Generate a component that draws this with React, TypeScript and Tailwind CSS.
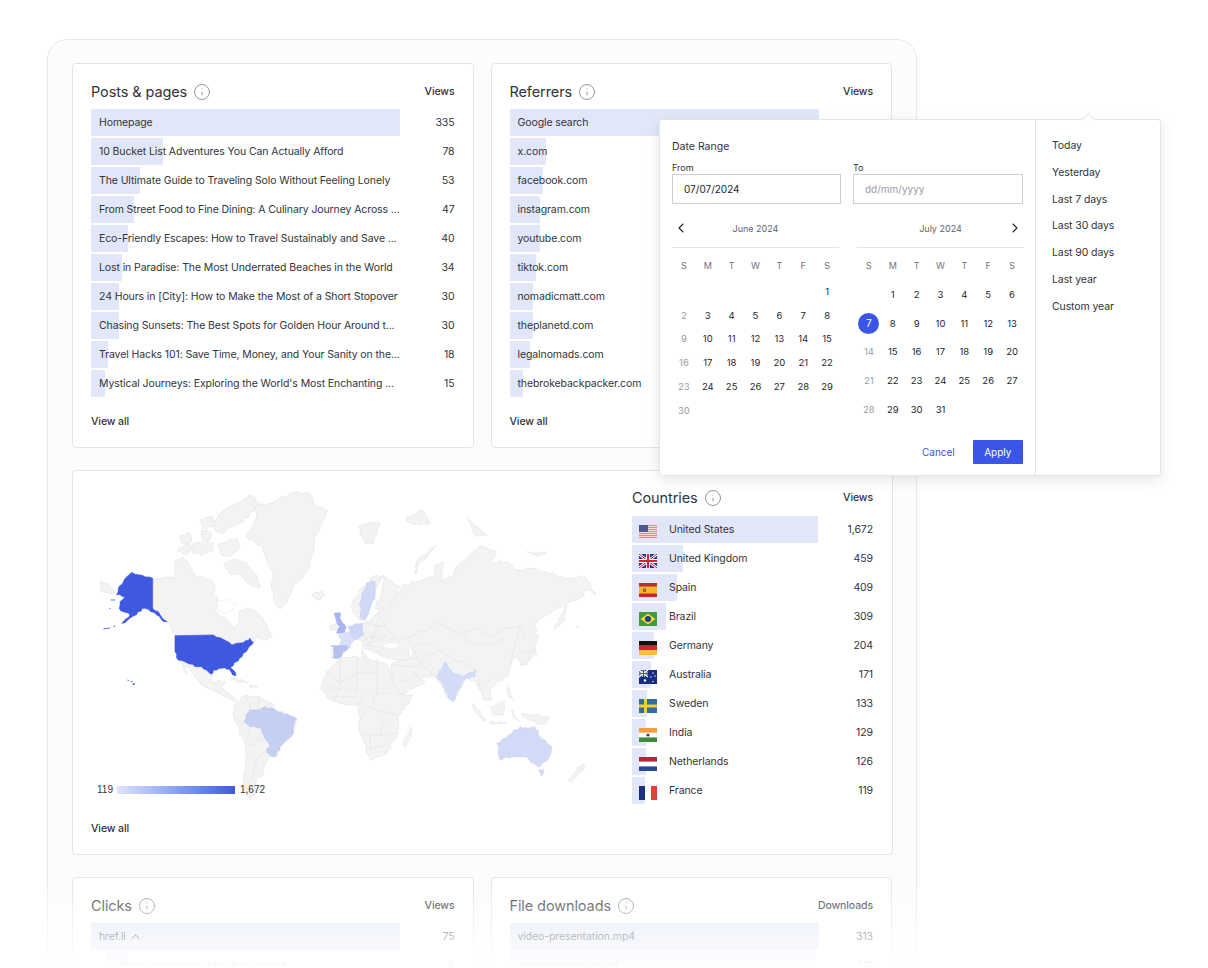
import React from "react";
import { ChevronLeft, ChevronRight, ChevronUp, Info } from "lucide-react";

type Row = { label: React.ReactNode; value: string; bar: number };

const posts: Row[] = [
  { label: "Homepage", value: "335", bar: 309 },
  { label: "10 Bucket List Adventures You Can Actually Afford", value: "78", bar: 72 },
  { label: "The Ultimate Guide to Traveling Solo Without Feeling Lonely", value: "53", bar: 49 },
  { label: "From Street Food to Fine Dining: A Culinary Journey Across ...", value: "47", bar: 43 },
  { label: "Eco-Friendly Escapes: How to Travel Sustainably and Save ...", value: "40", bar: 37 },
  { label: "Lost in Paradise: The Most Underrated Beaches in the World", value: "34", bar: 31 },
  { label: "24 Hours in [City]: How to Make the Most of a Short Stopover", value: "30", bar: 28 },
  { label: "Chasing Sunsets: The Best Spots for Golden Hour Around t...", value: "30", bar: 28 },
  { label: "Travel Hacks 101: Save Time, Money, and Your Sanity on the...", value: "18", bar: 17 },
  { label: "Mystical Journeys: Exploring the World's Most Enchanting ...", value: "15", bar: 14 },
];

const referrers: Row[] = [
  { label: "Google search", value: "", bar: 309 },
  { label: "x.com", value: "", bar: 36 },
  { label: "facebook.com", value: "", bar: 33 },
  { label: "instagram.com", value: "", bar: 30 },
  { label: "youtube.com", value: "", bar: 30 },
  { label: "tiktok.com", value: "", bar: 26 },
  { label: "nomadicmatt.com", value: "", bar: 23 },
  { label: "theplanetd.com", value: "", bar: 23 },
  { label: "legalnomads.com", value: "", bar: 20 },
  { label: "thebrokebackpacker.com", value: "", bar: 13 },
];

const countries: { name: string; value: string; bar: number; flag: React.ReactNode }[] = [
  { name: "United States", value: "1,672", bar: 186, flag: <FlagUS /> },
  { name: "United Kingdom", value: "459", bar: 51, flag: <FlagUK /> },
  { name: "Spain", value: "409", bar: 45, flag: <FlagES /> },
  { name: "Brazil", value: "309", bar: 34, flag: <FlagBR /> },
  { name: "Germany", value: "204", bar: 22, flag: <FlagDE /> },
  { name: "Australia", value: "171", bar: 19, flag: <FlagAU /> },
  { name: "Sweden", value: "133", bar: 15, flag: <FlagSE /> },
  { name: "India", value: "129", bar: 14, flag: <FlagIN /> },
  { name: "Netherlands", value: "126", bar: 14, flag: <FlagNL /> },
  { name: "France", value: "119", bar: 13, flag: <FlagFR /> },
];

function FlagBox({ children }: { children: React.ReactNode }) {
  return (
    <svg width="18" height="14" viewBox="0 0 18 14" className="mt-[4px] shrink-0">
      {children}
    </svg>
  );
}

function FlagUS() {
  return (
    <FlagBox>
      <rect width="18" height="14" fill="#f7dcdc" />
      {[0, 2, 4, 6, 8, 10, 12].map((y) => (
        <rect key={y} y={y} width="18" height="1" fill="#d98a8c" />
      ))}
      <rect width="9" height="7" fill="#4a5a8c" />
    </FlagBox>
  );
}

function FlagUK() {
  return (
    <FlagBox>
      <rect width="18" height="14" fill="#1f3a8a" />
      <path d="M0 0L18 14M18 0L0 14" stroke="#fff" strokeWidth="2.6" />
      <path d="M0 0L18 14M18 0L0 14" stroke="#d0213a" strokeWidth="1" />
      <path d="M9 0V14M0 7H18" stroke="#fff" strokeWidth="4" />
      <path d="M9 0V14M0 7H18" stroke="#d0213a" strokeWidth="2.2" />
    </FlagBox>
  );
}

function FlagES() {
  return (
    <FlagBox>
      <rect width="18" height="14" fill="#b5302c" />
      <rect y="3.5" width="18" height="7" fill="#f2b632" />
      <rect x="4" y="5.5" width="3" height="3.5" fill="#b5552c" />
    </FlagBox>
  );
}

function FlagBR() {
  return (
    <FlagBox>
      <rect width="18" height="14" fill="#3f9b3c" />
      <path d="M9 1.5L16.5 7L9 12.5L1.5 7Z" fill="#f5d33a" />
      <circle cx="9" cy="7" r="3" fill="#1e3f8a" />
    </FlagBox>
  );
}

function FlagDE() {
  return (
    <FlagBox>
      <rect width="18" height="4.7" fill="#111" />
      <rect y="4.7" width="18" height="4.7" fill="#d8232a" />
      <rect y="9.4" width="18" height="4.6" fill="#f4c430" />
    </FlagBox>
  );
}

function FlagAU() {
  return (
    <FlagBox>
      <rect width="18" height="14" fill="#1a2a80" />
      <path d="M0 0L9 7M9 0L0 7" stroke="#fff" strokeWidth="1.4" />
      <path d="M4.5 0V7M0 3.5H9" stroke="#fff" strokeWidth="2" />
      <path d="M4.5 0V7M0 3.5H9" stroke="#d0213a" strokeWidth="1" />
      <circle cx="6" cy="10.5" r="1.2" fill="#fff" />
      <circle cx="14" cy="3" r="0.7" fill="#fff" />
      <circle cx="16" cy="6" r="0.7" fill="#fff" />
      <circle cx="12" cy="7" r="0.7" fill="#fff" />
      <circle cx="14" cy="11.5" r="0.7" fill="#fff" />
    </FlagBox>
  );
}

function FlagSE() {
  return (
    <FlagBox>
      <rect width="18" height="14" fill="#2f6ca8" />
      <rect x="5" width="3" height="14" fill="#f4cb3a" />
      <rect y="5.5" width="18" height="3" fill="#f4cb3a" />
    </FlagBox>
  );
}

function FlagIN() {
  return (
    <FlagBox>
      <rect width="18" height="14" fill="#fff" />
      <rect width="18" height="4.6" fill="#f59c3a" />
      <rect y="9.4" width="18" height="4.6" fill="#3c8c3c" />
      <circle cx="9" cy="7" r="1.6" fill="#2b3a8c" />
    </FlagBox>
  );
}

function FlagNL() {
  return (
    <FlagBox>
      <rect width="18" height="14" fill="#fff" />
      <rect width="18" height="4.6" fill="#a92b3a" />
      <rect y="9.4" width="18" height="4.6" fill="#2c4a94" />
    </FlagBox>
  );
}

function FlagFR() {
  return (
    <FlagBox>
      <rect width="18" height="14" fill="#fff" />
      <rect width="6" height="14" fill="#1c2f80" />
      <rect x="12" width="6" height="14" fill="#e53c3c" />
    </FlagBox>
  );
}

function Heading({ title, column }: { title: string; column: string }) {
  return (
    <div className="flex h-[20px] items-center justify-between">
      <div className="flex items-center gap-[6px]">
        <h3 className="text-[14.5px] leading-5 font-normal tracking-[-0.1px] text-[#30343c]">{title}</h3>
        <Info size={18} strokeWidth={1.2} className="text-[#8a8a8a]" />
      </div>
      <span className="text-[10.5px] font-medium tracking-[-0.1px] text-[#30343c]">{column}</span>
    </div>
  );
}

function BarRow({ row }: { row: Row }) {
  return (
    <div className="flex h-[27px] items-center justify-between">
      <div className="relative h-full w-[309px]">
        <div className="h-full rounded-[1px] bg-[#e2e6f9]" style={{ width: row.bar }} />
        <span className="absolute top-0 left-[8px] text-[10.5px] leading-[27px] tracking-[-0.1px] whitespace-nowrap text-[#30343c]">
          {row.label}
        </span>
      </div>
      <span className="text-[10.5px] tracking-[-0.1px] text-[#30343c]">{row.value}</span>
    </div>
  );
}

function ListCard({ title, rows }: { title: string; rows: Row[] }) {
  return (
    <section className="h-[385px] w-[402px] rounded-[4px] border border-[#e4e4e4] bg-white px-[18px] pt-[18px]">
      <Heading title={title} column="Views" />
      <div className="mt-[7px] flex flex-col gap-[2px]">
        {rows.map((row, i) => (
          <BarRow key={i} row={row} />
        ))}
      </div>
      <div className="mt-[17px] text-[10.5px] font-medium tracking-[-0.1px] text-[#30343c]">View all</div>
    </section>
  );
}

const land = "#f3f3f3";
const edge = "#e2e2e2";
const usBlue = "#3f58e0";

// breaks long edges into small wobbles so the hand-placed outlines read as coastlines
function rough(p: string, closed: boolean) {
  const pts = p.trim().split(/\s+/).map((s) => s.split(",").map(Number));
  const out: string[] = [];
  const count = closed ? pts.length : pts.length - 1;
  for (let i = 0; i < count; i++) {
    const [x1, y1] = pts[i];
    const [x2, y2] = pts[(i + 1) % pts.length];
    out.push(`${x1},${y1}`);
    const dx = x2 - x1;
    const dy = y2 - y1;
    const len = Math.hypot(dx, dy);
    if (dx === 0 || Math.abs(dy) <= 2) continue;
    const n = Math.floor(len / 11);
    for (let k = 1; k <= n; k++) {
      const t = k / (n + 1);
      const x = x1 + dx * t;
      const y = y1 + dy * t;
      const h = Math.sin(x * 12.9898 + y * 78.233) * 43758.5453;
      const w = (h - Math.floor(h) - 0.5) * 8;
      out.push(`${(x - (dy / len) * w).toFixed(1)},${(y + (dx / len) * w).toFixed(1)}`);
    }
  }
  if (!closed) out.push(pts[pts.length - 1].join(","));
  return out.join(" ");
}

function Poly({ p, fill = land, stroke = edge }: { p: string; fill?: string; stroke?: string }) {
  return <polygon points={rough(p, true)} fill={fill} stroke={stroke} strokeWidth="1.8" strokeLinejoin="round" />;
}

function Borders({ lines }: { lines: string[] }) {
  return (
    <g fill="none" stroke={edge} strokeWidth="1.8" strokeLinejoin="round">
      {lines.map((l) => (
        <polyline key={l} points={rough(l, false)} />
      ))}
    </g>
  );
}

// coordinates are the 3x crop units, one group per half of the map
function WorldMap() {
  return (
    <svg width="530" height="325" viewBox="88 485 530 325" className="block">
      <g transform="translate(80 480) scale(0.3333)">
        <Poly p="525,75 575,70 610,50 650,35 690,40 700,70 742,90 725,130 705,170 700,220 680,280 640,320 620,370 600,387 585,370 575,320 580,290 560,240 540,195 498,170 520,135 530,110" />
        <Poly p="400,125 430,90 470,70 510,45 540,70 510,105 480,130 450,140 430,160 405,150" />
        <Poly p="340,190 370,180 400,190 395,215 360,225 335,215" />
        <Poly p="295,205 320,190 335,205 315,225 295,215" />
        <Poly p="365,150 395,160 390,180 365,175" />
        <Poly p="300,165 330,160 335,185 305,190" />
        <Poly p="360,120 395,110 400,140 370,145" />
        <Poly p="415,190 470,175 480,200 450,230 420,222" />
        <Poly p="430,250 455,240 490,245 530,285 540,325 510,312 480,285 450,282" />
        <Poly p="695,345 725,332 735,345 715,360" />
        <Poly p="60,305 75,310 105,335 95,342 62,335" />
        <Poly p="220,298 262,290 285,298 282,245 310,232 335,265 345,292 370,290 395,300 405,325 400,340 415,360 408,395 440,420 462,447 478,425 478,395 500,385 530,395 550,420 565,450 578,472 550,480 530,470 520,488 510,475 490,488 470,490 455,495 430,478 400,465 285,467 265,425 240,395 220,385" />
        <polygon points={rough("410,365 445,360 470,372 452,395 430,400 412,390", true)} fill="#fff" stroke={edge} strokeWidth="1.5" />
        <Poly p="295,540 320,548 345,560 365,560 380,570 395,583 395,610 415,600 435,605 425,625 445,640 470,660 462,665 440,650 415,640 385,625 355,600 335,575 315,555 320,585 305,555" />
        <Poly p="450,595 490,600 505,610 470,605" />
        <Poly p="510,612 535,620 510,622" />
        <Poly p="470,665 500,645 535,650 575,670 590,690 640,710 650,718 635,770 600,800 590,830 565,830 550,880 530,900 525,945 510,960 490,930 495,870 500,820 495,790 465,725 460,705" />
        <Borders lines={["500,645 510,690", "535,650 535,690", "575,670 555,680", "492,725 465,715", "510,740 500,790", "545,745 530,785 500,800", "555,775 530,785", "560,815 530,835 520,900"]} />
        <Poly p="555,680 585,690 640,710 650,718 632,770 600,800 590,825 578,830 560,815 570,795 555,775 545,745 510,740 492,725 510,690 535,690" fill="#c5cff3" stroke="#b9c5f0" />
        <Poly p="155,277 218,295 218,385 235,395 262,425 250,425 230,405 195,385 175,395 150,415 125,430 150,405 130,395 118,385 120,365 135,350 110,345 115,325 130,305" fill={usBlue} stroke={usBlue} />
        <Poly p="285,467 400,465 430,478 455,495 470,490 490,488 510,475 520,488 505,505 490,520 478,535 470,545 452,560 460,570 468,587 458,585 448,568 425,565 400,570 395,583 380,570 365,560 345,560 320,548 295,540 285,515" fill={usBlue} stroke={usBlue} />
        <path d="M92,360L105,360M88,386L92,386M70,447L90,444M100,440L106,438M142,600L147,602M152,604L158,606" stroke={usBlue} strokeWidth="2.5" fill="none" />
        <circle cx="161" cy="612" r="3" fill={usBlue} />
      </g>
      <g transform="translate(320 480) scale(0.3333)">
        <Poly p="115,140 150,125 180,130 160,190 135,190" />
        <Poly p="255,120 305,90 330,130 280,135" />
        <Poly p="440,110 470,140 500,165 470,170" />
        <Poly p="285,285 290,240 350,195 300,250" />
        <Poly p="620,215 680,220 650,228" />
        <Poly p="0,625 20,575 60,535 110,530 200,552 225,610 250,645 280,645 235,710 235,760 200,820 150,842 120,760 115,675 60,670 20,650" />
        <Borders lines={["20,575 60,610 110,580 170,575", "60,535 60,610 45,660", "110,530 110,640", "170,535 172,640 210,640", "130,640 115,675", "172,640 150,680 120,720", "150,680 235,710", "125,765 180,765 195,725", "150,765 150,810 200,790", "20,620 110,630", "30,650 110,650", "235,760 180,765"]} />
        <Poly p="130,430 150,420 175,395 195,390 200,350 240,340 250,315 285,305 320,295 345,290 345,255 370,245 360,300 395,290 410,260 440,235 480,195 530,215 510,250 560,245 590,270 640,265 690,280 750,295 795,290 828,345 800,330 790,350 740,372 702,390 640,430 655,465 640,510 605,555 585,530 570,560 565,590 530,605 510,630 515,660 490,660 480,630 470,610 440,590 400,665 380,650 360,610 345,590 300,595 280,575 315,610 280,625 245,645 215,600 212,555 240,540 190,530 150,510 130,505 125,480 105,478" />
        <Poly p="125,505 150,540 142,550 125,520" />
        <ellipse cx="213" cy="497" rx="24" ry="9" fill="#fff" stroke={edge} strokeWidth="1.5" />
        <ellipse cx="272" cy="510" rx="7" ry="20" fill="#fff" stroke={edge} strokeWidth="1.5" />
        <Borders lines={["265,470 320,450 350,425 385,445 420,465 470,445 510,470 555,445 600,440 615,470", "265,470 270,500 330,490 355,510 400,540 430,545 470,570", "430,470 480,500 550,480", "270,500 300,545 345,590", "300,545 355,510", "212,555 300,560", "240,540 300,535", "150,465 230,480 262,470", "130,465 160,510", "195,440 230,480", "175,395 195,440", "130,430 195,440", "145,470 190,480", "150,490 190,480", "165,510 190,530", "470,570 480,630", "510,600 480,630", "240,610 280,590", "585,530 640,510", "570,560 600,440", "150,420 195,465", "130,480 170,455", "135,495 185,505", "165,440 150,490"]} />
        <Poly p="92,380 120,330 160,290 190,285 175,310 165,340 135,420 120,420 100,400" />
        <Poly p="190,290 240,320 225,360 195,390 165,385 185,340" />
        <Poly p="140,308 165,305 165,345 150,385 135,420 120,415 122,365" fill="#d0d9f5" stroke="#c3cef3" />
        <Poly p="30,435 50,430 48,448 30,450" />
        <Poly p="42,400 60,398 62,420 78,445 75,458 50,460 60,440 50,425" fill="#a8b5ee" stroke="#98a7eb" />
        <Poly p="55,465 90,455 105,478 90,505 60,497 65,480" fill="#d9e0f8" stroke="#ccd5f5" />
        <Poly p="85,438 128,430 130,465 105,478 90,455" fill="#cdd6f6" stroke="#c0ccf4" />
        <Poly p="32,505 42,505 42,535 35,535" />
        <Poly p="32,497 80,497 85,505 55,535 42,535 42,505" fill="#b6c2f1" stroke="#a8b6ee" />
        <Poly p="350,590 375,545 395,575 430,590 465,570 465,590 440,595 430,600 400,665 385,655 365,605" fill="#d3dcf6" stroke="#c8d2f4" />
        <Poly p="530,790 565,765 600,740 625,745 645,740 660,770 695,800 685,835 660,860 640,850 620,830 575,830 540,840" fill="#d1daf6" stroke="#c7d1f4" />
        <Poly p="655,870 672,870 665,888" fill="#d1daf6" stroke="#c7d1f4" />
        <Poly p="745,900 790,850 795,860 755,905" />
        <Poly p="458,670 500,720 490,722 458,680" />
        <Poly p="510,725 560,730 510,732" />
        <Poly p="515,680 555,665 550,705 520,705" />
        <Poly p="560,620 585,665 565,650" />
        <Poly p="605,700 690,710 670,735 625,720" />
        <Poly p="575,690 600,725 580,715" />
        <Poly p="600,555 640,520 650,530 645,500 638,530 620,555" />
        <Poly p="702,450 725,400 740,375 735,420" />
        <Poly p="250,790 270,740 275,760 260,800" />
        <circle cx="772" cy="441" r="1.5" fill="#6d80e6" />
      </g>
    </svg>
  );
}

const june = ["", "", "", "", "", "", "1", "2", "3", "4", "5", "6", "7", "8", "9", "10", "11", "12", "13", "14", "15", "16", "17", "18", "19", "20", "21", "22", "23", "24", "25", "26", "27", "28", "29", "30"];
const july = ["", "1", "2", "3", "4", "5", "6", "7", "8", "9", "10", "11", "12", "13", "14", "15", "16", "17", "18", "19", "20", "21", "22", "23", "24", "25", "26", "27", "28", "29", "30", "31"];
const week = ["S", "M", "T", "W", "T", "F", "S"];
const presets = ["Today", "Yesterday", "Last 7 days", "Last 30 days", "Last 90 days", "Last year", "Custom year"];

function Month({ days, selected, rowClass, topClass }: { days: string[]; selected?: string; rowClass: string; topClass: string }) {
  return (
    <>
      <div className="mt-[9px] grid h-[18px] grid-cols-7 items-center text-center text-[9px] text-[#6f7280]">
        {week.map((d, i) => (
          <span key={i}>{d}</span>
        ))}
      </div>
      <div className={`grid grid-cols-7 text-center text-[9.5px] ${rowClass} ${topClass}`}>
        {days.map((d, i) => {
          const sunday = i % 7 === 0;
          if (d && d === selected) {
            return (
              <span key={i} className="flex items-center justify-center">
                <span className="flex h-[21px] w-[21px] items-center justify-center rounded-full bg-[#3b55e6] text-[10px] text-white">{d}</span>
              </span>
            );
          }
          return (
            <span key={i} className={`flex items-center justify-center ${sunday ? "text-[#9a9ca3]" : "text-[#23262d]"}`}>
              {d}
            </span>
          );
        })}
      </div>
    </>
  );
}

function DatePopover() {
  return (
    <div className="absolute top-[119px] left-[659px] flex h-[357px] w-[502px] rounded-[3px] border border-[#e6e6e6] bg-white shadow-[0_4px_14px_rgba(0,0,0,0.10)]">
      <div className="absolute -top-[5px] left-[424px] h-[9px] w-[9px] rotate-45 border-t border-l border-[#e6e6e6] bg-white" />
      <div className="w-[376px] shrink-0 border-r border-[#e2e2e2] pt-[19px] pl-[12px]">
        <div className="text-[10.5px] leading-[15px] text-[#30343c]">Date Range</div>
        <div className="mt-[7px] flex gap-[12px]">
          <label className="block w-[169px]">
            <span className="block text-[9px] leading-[13px] text-[#30343c]">From</span>
            <span className="block h-[30px] border border-[#cfcfcf] pl-[11px] text-[10px] leading-[29px] text-[#23262d]">07/07/2024</span>
          </label>
          <label className="block w-[170px]">
            <span className="block text-[9px] leading-[13px] text-[#30343c]">To</span>
            <span className="block h-[30px] border border-[#cfcfcf] pl-[11px] text-[10px] leading-[29px] text-[#9a9ca3]">dd/mm/yyyy</span>
          </label>
        </div>
        <div className="flex gap-[18px]">
          <div className="w-[167px]">
            <div className="mt-[16px] flex h-[28px] items-start border-b border-[#e4e4e4]">
              <ChevronLeft size={16} strokeWidth={1.6} className="ml-[1px] shrink-0 text-[#23262d]" />
            </div>
            <div className="-mt-[28px] h-[28px] text-center text-[9px] leading-[18px] text-[#5f626c]">June 2024</div>
            <Month days={june} rowClass="auto-rows-[23.8px]" topClass="mt-[5px]" />
          </div>
          <div className="w-[167px]">
            <div className="mt-[16px] flex h-[28px] items-start justify-end border-b border-[#e4e4e4]">
              <ChevronRight size={16} strokeWidth={1.6} className="mr-[1px] shrink-0 text-[#23262d]" />
            </div>
            <div className="-mt-[28px] h-[28px] text-center text-[9px] leading-[18px] text-[#5f626c]">July 2024</div>
            <Month days={july} selected="7" rowClass="auto-rows-[28.6px]" topClass="mt-[6px]" />
          </div>
        </div>
        <div className="absolute top-[320px] left-[262px] flex items-center gap-[18px]">
          <span className="text-[10px] text-[#3b55e6]">Cancel</span>
          <span className="flex h-[24px] w-[50px] items-center justify-center rounded-[1px] bg-[#3b55e6] text-[10px] text-white">Apply</span>
        </div>
      </div>
      <ul className="flex flex-col gap-[11.8px] pt-[18px] pl-[16px] text-[10.5px] leading-[15px] tracking-[-0.1px] text-[#30343c]">
        {presets.map((p) => (
          <li key={p}>{p}</li>
        ))}
      </ul>
    </div>
  );
}

function FadedCard({ title, column, children }: { title: string; column: string; children: React.ReactNode }) {
  return (
    <section className="h-[200px] w-[402px] rounded-[4px] border border-[#e4e4e4] bg-white px-[18px] pt-[18px]">
      <Heading title={title} column={column} />
      <div className="mt-[7px] flex flex-col gap-[2px]">{children}</div>
    </section>
  );
}

export default function App() {
  return (
    <div
      className="relative h-[968px] w-[1208px] overflow-hidden bg-white"
      style={{ fontFamily: "Inter, 'Noto Sans', sans-serif" }}
    >
      <div className="mt-[39px] ml-[47px] h-[1000px] w-[870px] rounded-[20px] border border-[#e9e9e9] bg-[#fcfcfc] px-[24px] pt-[23px]">
        <div className="flex gap-[17px]">
          <ListCard title="Posts & pages" rows={posts} />
          <ListCard title="Referrers" rows={referrers} />
        </div>

        <section className="relative mt-[22px] flex h-[385px] w-[821px] rounded-[4px] border border-[#e4e4e4] bg-white">
          <div className="relative w-[559px] shrink-0 pt-[14px] pl-[15px]">
            <WorldMap />
            <div className="absolute top-[311px] left-[24px] flex items-center text-[10px] text-[#333]" style={{ fontFamily: "'Liberation Sans', sans-serif" }}>
              <span className="w-[20px]">119</span>
              <span className="h-[8px] w-[118px] bg-gradient-to-r from-[#dfe4fa] to-[#3f58e0]" />
              <span className="ml-[5px]">1,672</span>
            </div>
            <div className="absolute top-[350px] left-[18px] text-[10.5px] font-medium tracking-[-0.1px] text-[#30343c]">View all</div>
          </div>
          <div className="w-[241px] pt-[17px]">
            <Heading title="Countries" column="Views" />
            <div className="mt-[8px] flex flex-col gap-[2px]">
              {countries.map((c) => (
                <div key={c.name} className="flex h-[27px] items-center justify-between">
                  <div className="relative h-full w-[186px]">
                    <div className="h-full rounded-[1px] bg-[#e2e6f9]" style={{ width: c.bar }} />
                    <div className="absolute top-0 left-[7px] flex h-full items-center gap-[12px] text-[10.5px] tracking-[-0.1px] whitespace-nowrap text-[#30343c]">
                      {c.flag}
                      <span>{c.name}</span>
                    </div>
                  </div>
                  <span className="text-[10.5px] tracking-[-0.1px] text-[#30343c]">{c.value}</span>
                </div>
              ))}
            </div>
          </div>
        </section>

        <div className="mt-[22px] flex gap-[17px]">
          <FadedCard title="Clicks" column="Views">
            <BarRow
              row={{
                label: (
                  <span className="inline-flex items-center gap-[3px]">
                    href.li
                    <ChevronUp size={13} strokeWidth={2} className="text-[#555]" />
                  </span>
                ),
                value: "75",
                bar: 309,
              }}
            />
            <div className="flex h-[27px] items-center justify-between">
              <div className="relative ml-[15px] h-full w-[294px]">
                <div className="h-full w-[22px] bg-[#e2e6f9]" />
                <span className="absolute top-0 left-[8px] text-[10.5px] leading-[27px] tracking-[-0.1px] text-[#30343c]">situsrl.com/xmlrpc.php?for=jetpack</span>
              </div>
              <span className="text-[10.5px] text-[#30343c]">6</span>
            </div>
          </FadedCard>
          <FadedCard title="File downloads" column="Downloads">
            <BarRow row={{ label: "video-presentation.mp4", value: "313", bar: 309 }} />
            <BarRow row={{ label: "operatorsmanual.pdf", value: "310", bar: 306 }} />
          </FadedCard>
        </div>
      </div>

      <DatePopover />
      <div className="absolute inset-x-0 top-[875px] h-[93px] bg-gradient-to-b from-white/0 to-white" />
    </div>
  );
}
